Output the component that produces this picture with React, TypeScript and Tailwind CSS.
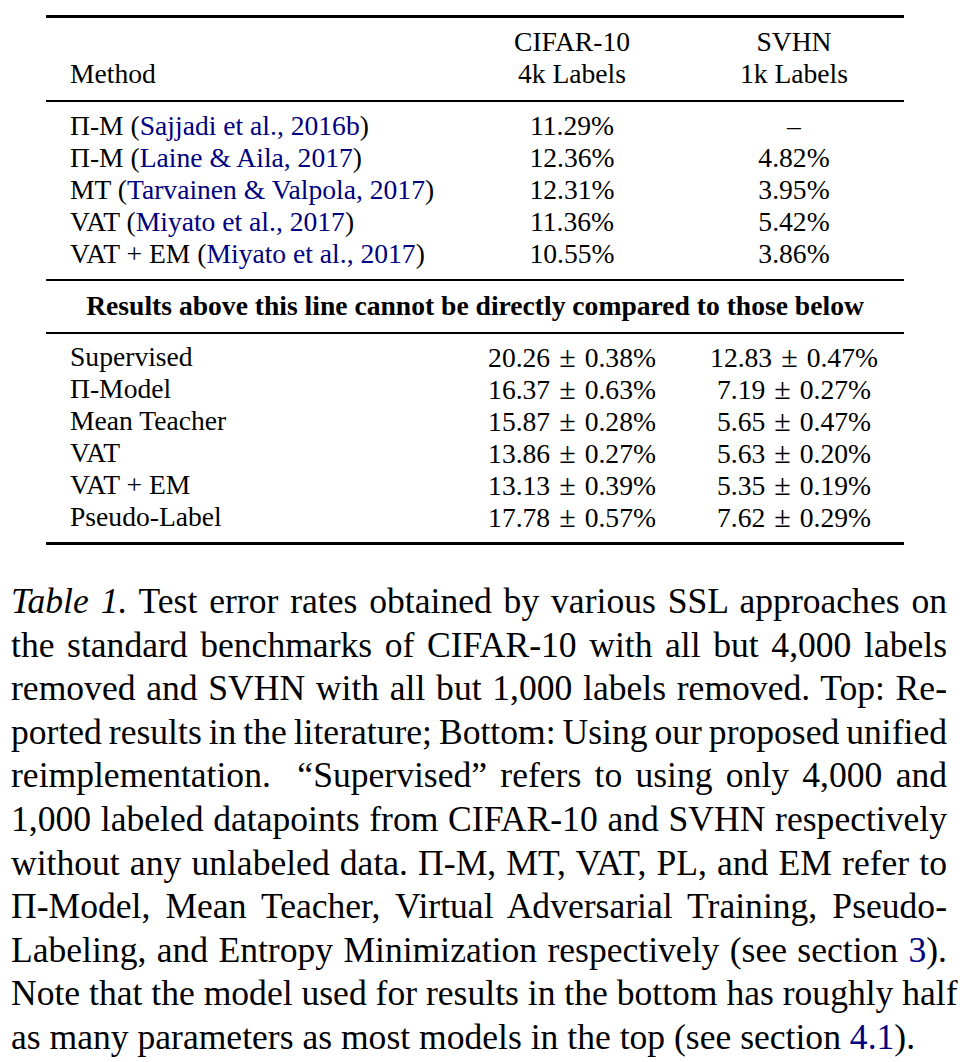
import React from 'react';

const Cite: React.FC<{ children: React.ReactNode }> = ({ children }) => (
  <span className="text-[#000080]">{children}</span>
);

const topRows: [React.ReactNode, string, string][] = [
  [<>Π-M (<Cite>Sajjadi et al., 2016b</Cite>)</>, '11.29%', '–'],
  [<>Π-M (<Cite>Laine &amp; Aila, 2017</Cite>)</>, '12.36%', '4.82%'],
  [<>MT (<Cite>Tarvainen &amp; Valpola, 2017</Cite>)</>, '12.31%', '3.95%'],
  [<>VAT (<Cite>Miyato et al., 2017</Cite>)</>, '11.36%', '5.42%'],
  [<>VAT + EM (<Cite>Miyato et al., 2017</Cite>)</>, '10.55%', '3.86%'],
];

const bottomRows: [string, string, string, string, string][] = [
  ['Supervised', '20.26', '0.38%', '12.83', '0.47%'],
  ['Π-Model', '16.37', '0.63%', '7.19', '0.27%'],
  ['Mean Teacher', '15.87', '0.28%', '5.65', '0.47%'],
  ['VAT', '13.86', '0.27%', '5.63', '0.20%'],
  ['VAT + EM', '13.13', '0.39%', '5.35', '0.19%'],
  ['Pseudo-Label', '17.78', '0.57%', '7.62', '0.29%'],
];

// a ± b, with math-like spacing round the sign
const Pm: React.FC<{ a: string; b: string }> = ({ a, b }) => (
  <>
    {a}
    <span className="mx-[9px] text-[30px]">±</span>
    {b}
  </>
);

const Row: React.FC<{ a: React.ReactNode; b: React.ReactNode; c: React.ReactNode }> = ({ a, b, c }) => (
  <div className="grid grid-cols-[414px_224px_220px] h-8 leading-8">
    <div className="pl-6 whitespace-nowrap">{a}</div>
    <div className="text-center whitespace-nowrap">{b}</div>
    <div className="text-center whitespace-nowrap">{c}</div>
  </div>
);

const Line: React.FC<{ children: React.ReactNode; last?: boolean; tight?: boolean }> = ({ children, last, tight }) => (
  <div
    className={
      (last ? 'whitespace-nowrap' : 'text-justify [text-align-last:justify] whitespace-nowrap') +
      (tight ? ' [word-spacing:-6px]' : '')
    }
  >
    {children}
  </div>
);

export default function App() {
  return (
    <div className="w-[962px] h-[1062px] bg-white text-black font-['Liberation_Serif',serif] overflow-hidden">
      {/* table */}
      <div className="ml-[46px] mt-[15px] w-[858px] text-[27.6px]">
        <div className="h-[3px] bg-black" />
        <div className="pt-2 pb-[10px]">
          <Row a="" b="CIFAR-10" c="SVHN" />
          <Row a="Method" b="4k Labels" c="1k Labels" />
        </div>
        <div className="h-[2px] bg-black" />
        <div className="pt-2 pb-[9px]">
          {topRows.map((r, i) => (
            <Row key={i} a={r[0]} b={r[1]} c={r[2]} />
          ))}
        </div>
        <div className="h-[2px] bg-black" />
        <div className="pt-[9px] pb-[10px] h-[51px] leading-8 text-center font-bold whitespace-nowrap">
          Results above this line cannot be directly compared to those below
        </div>
        <div className="h-[2px] bg-black" />
        <div className="pt-[7px] pb-[9px]">
          {bottomRows.map((r, i) => (
            <Row key={i} a={r[0]} b={<Pm a={r[1]} b={r[2]} />} c={<Pm a={r[3]} b={r[4]} />} />
          ))}
        </div>
        <div className="h-[3px] bg-black" />
      </div>

      {/* caption */}
      <div className="ml-[11px] mt-[35px] w-[936px] text-[35.6px] leading-[43.6px]">
        <Line><i>Table 1.</i> Test error rates obtained by various SSL approaches on</Line>
        <Line>the standard benchmarks of CIFAR-10 with all but 4,000 labels</Line>
        <Line>removed and SVHN with all but 1,000 labels removed. Top: Re-</Line>
        <Line tight>ported results in the literature; Bottom: Using our proposed unified</Line>
        <Line>reimplementation.&nbsp; “Supervised” refers to using only 4,000 and</Line>
        <Line>1,000 labeled datapoints from CIFAR-10 and SVHN respectively</Line>
        <Line>without any unlabeled data. Π-M, MT, VAT, PL, and EM refer to</Line>
        <Line>Π-Model, Mean Teacher, Virtual Adversarial Training, Pseudo-</Line>
        <Line>Labeling, and Entropy Minimization respectively (see section <Cite>3</Cite>).</Line>
        <Line>Note that the model used for results in the bottom has roughly half</Line>
        <Line last>as many parameters as most models in the top (see section <Cite>4.1</Cite>).</Line>
      </div>
    </div>
  );
}
